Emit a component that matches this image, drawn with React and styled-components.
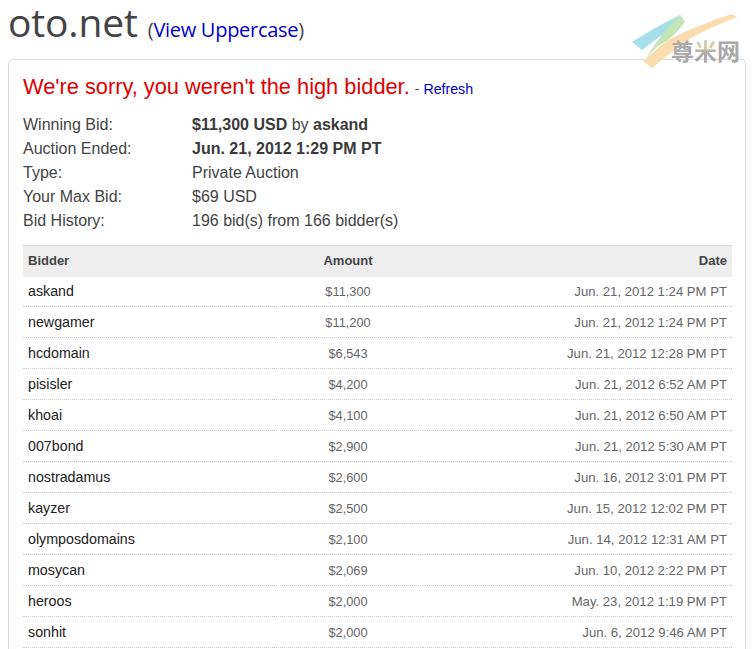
import React from "react";
import styled, { createGlobalStyle } from "styled-components";

const Global = createGlobalStyle`
  html, body { margin: 0; padding: 0; background: #fff; overflow: hidden; }
  body { font-family: "Liberation Sans", Arial, sans-serif; color: #333; }
`;
const Page = styled.div`
  position: relative;
  width: 755px;
  height: 649px;
  overflow: hidden;
  padding: 0 9px 0 8px;
  box-sizing: border-box;
`;
const Header = styled.header`
  display: flex;
  align-items: baseline;
  height: 59px;
  box-sizing: border-box;
  font-family: "Open Sans", sans-serif;
  color: #444;
`;
const Domain = styled.h1`
  margin: 0;
  font-size: 39px;
  line-height: 44px;
  font-weight: 400;
  letter-spacing: -0.15px;
`;
const ViewLink = styled.span`
  margin-left: 10px;
  font-size: 20px;
  letter-spacing: -0.28px;
  a { color: #0000c8; text-decoration: none; }
`;
const Card = styled.section`
  border: 1px solid #ddd;
  border-bottom: none;
  border-radius: 5px 5px 0 0;
  padding: 13px 13px 0 14px;
  height: 590px;
  box-sizing: border-box;
`;
const Status = styled.div`
  display: flex;
  align-items: baseline;
  height: 28px;
  margin-bottom: 12px;
`;
const Sorry = styled.span`
  font-size: 21.8px;
  line-height: 28px;
  color: #e00000;
`;
const Refresh = styled.span`
  margin-left: 5px;
  font-size: 14.2px;
  color: #555;
  a { color: #0000c8; text-decoration: none; }
`;
const Facts = styled.dl`
  display: grid;
  grid-template-columns: 169px 1fr;
  grid-auto-rows: 24px;
  margin: 0 0 12px;
  font-size: 16px;
  line-height: 24px;
  color: #444;
`;
const Term = styled.dt`
  margin: 0;
`;
const Value = styled.dd`
  margin: 0;
  b { color: #3a3a3a; }
`;
const Table = styled.table`
  width: 709px;
  border-collapse: collapse;
  table-layout: fixed;
`;
const HeadRow = styled.tr`
  height: 31px;
  background: #eee;
  border-top: 1px solid #d4d4d4;
`;
const Th = styled.th`
  padding: 0 5px 2px;
  font-size: 13px;
  color: #444;
  font-weight: 700;
  text-align: ${(p) => p.$align || "left"};
`;
const Row = styled.tr`
  height: 31px;
  border-bottom: 1px dotted #ccc;
  &:first-child { height: 30px; }
`;
const Name = styled.td`
  padding: 0 5px;
  color: #222;
  font-size: 14.25px;
`;
const Amount = styled.td`
  padding: 0 5px;
  color: #666;
  font-size: 12.8px;
  text-align: center;
`;
const DateCell = styled.td`
  padding: 0 5px;
  color: #666;
  font-size: 13.15px;
  text-align: right;
`;
const Watermark = styled.div`
  position: absolute;
  left: 630px;
  top: 12px;
  width: 115px;
  height: 60px;
`;
const WatermarkText = styled.span`
  position: absolute;
  left: 41px;
  top: 23px;
  font-family: "Noto Sans CJK SC", sans-serif;
  font-size: 23px;
  line-height: 30px;
  font-weight: 700;
  color: #a9a9a9;
  white-space: nowrap;
`;
const TintedGlyph = styled.span`
  background: linear-gradient(180deg, #9ed6df 0%, #d8d0a0 40%, #aaa 60%);
  -webkit-background-clip: text;
  background-clip: text;
  color: transparent;
`;

const facts = [
  ["Winning Bid:", <><b>$11,300 USD</b> by <b>askand</b></>],
  ["Auction Ended:", <b>Jun. 21, 2012 1:29 PM PT</b>],
  ["Type:", "Private Auction"],
  ["Your Max Bid:", "$69 USD"],
  ["Bid History:", "196 bid(s) from 166 bidder(s)"],
];
const bids = [
  ["askand", "$11,300", "Jun. 21, 2012 1:24 PM PT"],
  ["newgamer", "$11,200", "Jun. 21, 2012 1:24 PM PT"],
  ["hcdomain", "$6,543", "Jun. 21, 2012 12:28 PM PT"],
  ["pisisler", "$4,200", "Jun. 21, 2012 6:52 AM PT"],
  ["khoai", "$4,100", "Jun. 21, 2012 6:50 AM PT"],
  ["007bond", "$2,900", "Jun. 21, 2012 5:30 AM PT"],
  ["nostradamus", "$2,600", "Jun. 16, 2012 3:01 PM PT"],
  ["kayzer", "$2,500", "Jun. 15, 2012 12:02 PM PT"],
  ["olymposdomains", "$2,100", "Jun. 14, 2012 12:31 AM PT"],
  ["mosycan", "$2,069", "Jun. 10, 2012 2:22 PM PT"],
  ["heroos", "$2,000", "May. 23, 2012 1:19 PM PT"],
  ["sonhit", "$2,000", "Jun. 6, 2012 9:46 AM PT"],
];

export default function App() {
  return (
    <Page>
      <Global />
      <Header>
        <Domain>oto.net</Domain>
        <ViewLink>(<a href="#u">View Uppercase</a>)</ViewLink>
      </Header>
      <Card>
        <Status>
          <Sorry>We're sorry, you weren't the high bidder.</Sorry>
          <Refresh>- <a href="#r">Refresh</a></Refresh>
        </Status>
        <Facts>
          {facts.map(([t, v]) => (
            <React.Fragment key={t}>
              <Term>{t}</Term>
              <Value>{v}</Value>
            </React.Fragment>
          ))}
        </Facts>
        <Table>
          <colgroup>
            <col style={{ width: 250 }} />
            <col style={{ width: 150 }} />
            <col />
          </colgroup>
          <thead>
            <HeadRow>
              <Th>Bidder</Th>
              <Th $align="center">Amount</Th>
              <Th $align="right">Date</Th>
            </HeadRow>
          </thead>
          <tbody>
            {bids.map(([n, a, d]) => (
              <Row key={n}>
                <Name>{n}</Name>
                <Amount>{a}</Amount>
                <DateCell>{d}</DateCell>
              </Row>
            ))}
          </tbody>
        </Table>
      </Card>
      <Watermark>
        <svg width="115" height="60" viewBox="0 0 115 60">
          <path d="M2 30 C18 20 33 11 50 3 L55 10 L40 17 L12 38 Z" fill="#a6dfe9" />
          <path d="M50 3 L55 10 C50 17 44 23 38 28 L28 34 L17 45 C26 30 36 16 50 3 Z" fill="#c3e5b8" />
          <path d="M13 49 C24 40 30 33 40 27 C60 17 80 9 102 2 L107 5 C85 14 70 20 52 32 L22 56 Z" fill="#fbdcae" />
        </svg>
        <WatermarkText>尊<TintedGlyph>米</TintedGlyph>网</WatermarkText>
      </Watermark>
    </Page>
  );
}
